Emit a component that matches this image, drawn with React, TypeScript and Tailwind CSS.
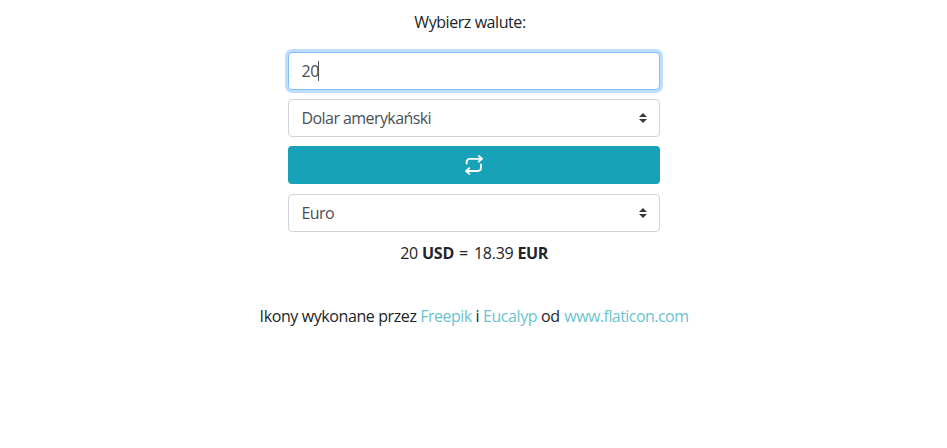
import React from "react";

function Chevrons() {
  return (
    <svg width="8" height="10" viewBox="0 0 4 5" className="mr-3">
      <path fill="#343a40" d="M2 0L0 2h4zm0 5L0 3h4z" />
    </svg>
  );
}

function Select({ label }: { label: string }) {
  return (
    <button className="flex h-[38px] w-full items-center justify-between rounded-[4px] border border-[#ced4da] bg-white pl-[13px] text-left text-[#495057]">
      <span className="tracking-[-0.57px]">{label}</span>
      <Chevrons />
    </button>
  );
}

export default function App() {
  return (
    <main className="flex h-[448px] flex-col items-center bg-white pt-[10px] font-['Open_Sans','Noto_Sans',sans-serif] text-[16px] leading-6 tracking-[-0.43px] text-[#212529]">
      <p className="mr-[7px]">Wybierz walute:</p>
      <div className="mt-[18px] flex w-[372px] flex-col">
        <div className="flex h-[38px] items-center rounded-[4px] border border-[#80bdff] bg-white pl-[13px] text-[#495057] shadow-[0_0_0_3px_rgba(0,123,255,0.25)]">
          <span>20</span>
          <span className="-ml-px h-5 w-px bg-[#495057]" />
        </div>
        <div className="mt-[9px]"><Select label="Dolar amerykański" /></div>
        <button className="mt-[9px] flex h-[38px] items-center justify-center rounded-[4px] bg-[#17a2b8]" aria-label="Zamień">
          <svg width="20" height="20" viewBox="0 0 20 20" fill="none" stroke="white" strokeWidth="1.8" strokeLinecap="round" strokeLinejoin="round">
            <path d="M2.7 8.5V7A3.2 3.2 0 0 1 5.9 3.8H18M14.8 1L18 3.8l-3.2 2.8M17 9.5v3.3a3.2 3.2 0 0 1-3.2 3.2H2M5.2 13.2L2 16l3.2 2.8" />
          </svg>
        </button>
        <div className="mt-[10px]"><Select label="Euro" /></div>
      </div>
      <p className="mt-[9px] ml-px tracking-[-0.25px]">20 <b className="tracking-[-0.15px]">USD</b> <span className="ml-px mr-[2px]">=</span> 18.39 <b className="tracking-[-0.4px]">EUR</b></p>
      <p className="mt-[39px] ml-px tracking-[-0.4px]">
        Ikony wykonane przez <a className="tracking-[-0.5px] text-[#6cc3cd]">Freepik</a> i <a className="text-[#6cc3cd]">Eucalyp</a> od <a className="ml-px tracking-[-0.55px] text-[#6cc3cd]">www.flaticon.com</a>
      </p>
    </main>
  );
}
